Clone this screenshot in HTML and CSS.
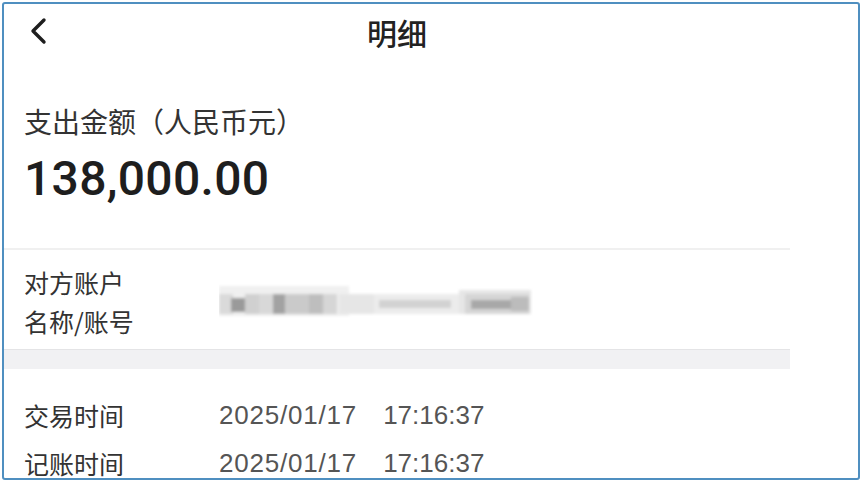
FILE: index.html
```html
<!DOCTYPE html>
<html lang="zh">
<head>
<meta charset="utf-8">
<title>明细</title>
<link rel="stylesheet" href="styles.css">
</head>
<body>
<div class="frame">
  <div class="screen">
    <header class="nav">
      <span class="back">
        <svg width="22" height="28" viewBox="0 0 22 28"><polyline points="16,3 5,14 16,25" fill="none" stroke="#1e1e1e" stroke-width="3.4" stroke-linecap="round" stroke-linejoin="round"/></svg>
      </span>
      <h1 class="title">明细</h1>
    </header>
    <section class="amount">
      <div class="amount-label">支出金额（人民币元）</div>
      <div class="amount-value">138,000.00</div>
    </section>
    <div class="divider"></div>
    <div class="row row-account">
      <div class="label">对方账户<br>名称/账号</div>
      <div class="value blurred">
        <svg width="320" height="40" viewBox="0 0 320 40">
          <defs><filter id="b" x="-10%" y="-50%" width="120%" height="200%"><feGaussianBlur stdDeviation="1.4"/></filter></defs>
          <g filter="url(#b)">
            <rect x="0" y="4" width="130" height="30" fill="#f0f0f0"/>
            <rect x="0" y="12" width="14" height="20" fill="#dadada"/>
            <rect x="12" y="16" width="14" height="14" fill="#9a9a9a"/>
            <rect x="26" y="12" width="14" height="20" fill="#d0d0d0"/>
            <rect x="40" y="12" width="14" height="20" fill="#d8d8d8"/>
            <rect x="54" y="12" width="12" height="20" fill="#a2a2a2"/>
            <rect x="66" y="12" width="24" height="20" fill="#cacaca"/>
            <rect x="90" y="12" width="14" height="20" fill="#bebebe"/>
            <rect x="104" y="12" width="14" height="20" fill="#d6d6d6"/>
            <rect x="120" y="12" width="36" height="20" fill="#e6e6e6"/>
            <rect x="155" y="12" width="85" height="20" fill="#ececec"/>
            <rect x="160" y="18" width="72" height="8" fill="#d2d2d2"/>
            <rect x="240" y="8" width="72" height="24" fill="#e6e6e6"/>
            <rect x="246" y="12" width="64" height="20" fill="#d6d6d6"/>
            <rect x="252" y="18" width="40" height="9" fill="#a8a8a8"/>
            <rect x="292" y="15" width="18" height="14" fill="#bcbcbc"/>
          </g>
        </svg>
      </div>
    </div>
    <div class="band"></div>
    <div class="rows">
      <div class="row">
        <div class="label">交易时间</div>
        <div class="value"><span class="date">2025/01/17</span><span>17:16:37</span></div>
      </div>
      <div class="row">
        <div class="label">记账时间</div>
        <div class="value"><span class="date">2025/01/17</span><span>17:16:37</span></div>
      </div>
    </div>
  </div>
</div>
</body>
</html>
```

FILE: styles.css
```css
html, body {
  margin: 0;
  padding: 0;
  background: #ffffff;
}
body {
  font-family: "Liberation Sans", "Noto Sans CJK SC", sans-serif;
  color: #333;
}
.frame {
  margin: 2px 0 0 2px;
  width: 854px;
  height: 474px;
  border: 2px solid #4f8fc0;
  border-radius: 3px;
  overflow: hidden;
  background: #fff;
}
.screen {
  width: 786px;
}
.nav {
  height: 56px;
  display: flex;
  align-items: center;
  justify-content: center;
  position: relative;
}
.back {
  position: absolute;
  left: 24px;
  top: 13px;
  display: flex;
}
.title {
  margin: 0;
  font-size: 30px;
  font-weight: 500;
  color: #222;
  font-family: "Noto Sans CJK SC", sans-serif;
}
.amount {
  padding: 43px 0 41px 20px;
}
.amount-label {
  font-size: 28px;
  line-height: 36px;
  color: #333;
  font-family: "Noto Sans CJK SC", sans-serif;
}
.amount-value {
  margin-top: 12px;
  font-family: Roboto, "Liberation Sans", sans-serif;
  font-size: 48px;
  line-height: 56px;
  font-weight: 500;
  color: #1e1e1e;
  letter-spacing: 0.3px;
}
.divider {
  height: 2px;
  background: #f0f0f0;
}
.row {
  display: flex;
  align-items: center;
  padding-left: 20px;
}
.row-account {
  padding-top: 13px;
  padding-bottom: 8px;
}
.label {
  width: 195px;
  flex: none;
  font-size: 25px;
  line-height: 39px;
  color: #333;
  font-family: "Noto Sans CJK SC", sans-serif;
}
.blurred {
  display: flex;
}
.band {
  height: 19px;
  border-top: 1px solid #e4e4e6;
  background: #f1f1f3;
}
.rows {
  padding-top: 22px;
}
.rows .row {
  height: 48px;
}
.value {
  font-size: 26px;
  color: #555;
  display: flex;
  gap: 26px;
}
.date {
  letter-spacing: 0.8px;
}
```
